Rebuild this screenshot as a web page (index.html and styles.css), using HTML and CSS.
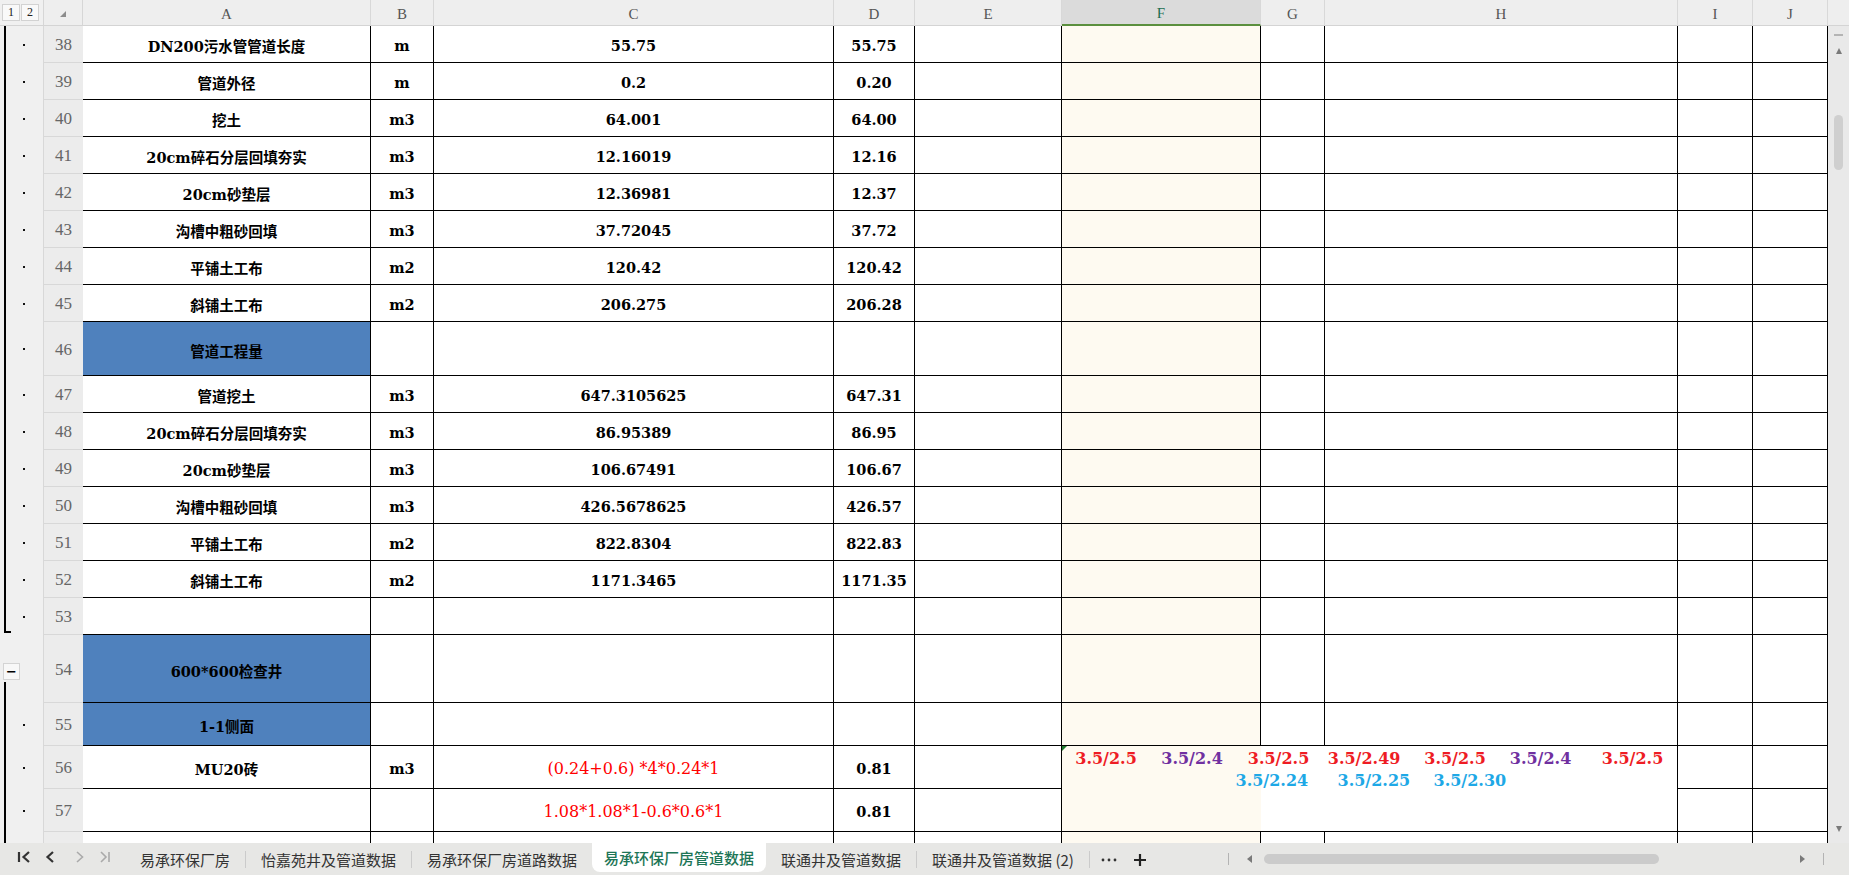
FILE: index.html
```html
<!DOCTYPE html>
<html lang="zh-CN">
<head>
<meta charset="utf-8">
<title>易承环保厂房管道数据</title>
<link rel="stylesheet" href="styles.css">
</head>
<body>
<div class="app">
  <div class="main">
    <div class="sheet">
      <div class="lvl"><span class="lvl-btn">1</span><span class="lvl-btn">2</span></div>
      <div class="corner"><span class="corner-tri"></span></div>
      <div class="ch">A</div><div class="ch">B</div><div class="ch">C</div><div class="ch">D</div><div class="ch">E</div><div class="ch ch-sel">F</div><div class="ch">G</div><div class="ch">H</div><div class="ch">I</div><div class="ch">J</div>

      <div class="ol g"></div><div class="rh">38</div><div class="c">DN200污水管管道长度</div><div class="c">m</div><div class="c">55.75</div><div class="c">55.75</div><div class="c"></div><div class="c f"></div><div class="c"></div><div class="c"></div><div class="c"></div><div class="c"></div>
      <div class="ol g"></div><div class="rh">39</div><div class="c">管道外径</div><div class="c">m</div><div class="c">0.2</div><div class="c">0.20</div><div class="c"></div><div class="c f"></div><div class="c"></div><div class="c"></div><div class="c"></div><div class="c"></div>
      <div class="ol g"></div><div class="rh">40</div><div class="c">挖土</div><div class="c">m3</div><div class="c">64.001</div><div class="c">64.00</div><div class="c"></div><div class="c f"></div><div class="c"></div><div class="c"></div><div class="c"></div><div class="c"></div>
      <div class="ol g"></div><div class="rh">41</div><div class="c">20cm碎石分层回填夯实</div><div class="c">m3</div><div class="c">12.16019</div><div class="c">12.16</div><div class="c"></div><div class="c f"></div><div class="c"></div><div class="c"></div><div class="c"></div><div class="c"></div>
      <div class="ol g"></div><div class="rh">42</div><div class="c">20cm砂垫层</div><div class="c">m3</div><div class="c">12.36981</div><div class="c">12.37</div><div class="c"></div><div class="c f"></div><div class="c"></div><div class="c"></div><div class="c"></div><div class="c"></div>
      <div class="ol g"></div><div class="rh">43</div><div class="c">沟槽中粗砂回填</div><div class="c">m3</div><div class="c">37.72045</div><div class="c">37.72</div><div class="c"></div><div class="c f"></div><div class="c"></div><div class="c"></div><div class="c"></div><div class="c"></div>
      <div class="ol g"></div><div class="rh">44</div><div class="c">平铺土工布</div><div class="c">m2</div><div class="c">120.42</div><div class="c">120.42</div><div class="c"></div><div class="c f"></div><div class="c"></div><div class="c"></div><div class="c"></div><div class="c"></div>
      <div class="ol g"></div><div class="rh">45</div><div class="c">斜铺土工布</div><div class="c">m2</div><div class="c">206.275</div><div class="c">206.28</div><div class="c"></div><div class="c f"></div><div class="c"></div><div class="c"></div><div class="c"></div><div class="c"></div>
      <div class="ol g"></div><div class="rh">46</div><div class="c blue">管道工程量</div><div class="c"></div><div class="c"></div><div class="c"></div><div class="c"></div><div class="c f"></div><div class="c"></div><div class="c"></div><div class="c"></div><div class="c"></div>
      <div class="ol g"></div><div class="rh">47</div><div class="c">管道挖土</div><div class="c">m3</div><div class="c">647.3105625</div><div class="c">647.31</div><div class="c"></div><div class="c f"></div><div class="c"></div><div class="c"></div><div class="c"></div><div class="c"></div>
      <div class="ol g"></div><div class="rh">48</div><div class="c">20cm碎石分层回填夯实</div><div class="c">m3</div><div class="c">86.95389</div><div class="c">86.95</div><div class="c"></div><div class="c f"></div><div class="c"></div><div class="c"></div><div class="c"></div><div class="c"></div>
      <div class="ol g"></div><div class="rh">49</div><div class="c">20cm砂垫层</div><div class="c">m3</div><div class="c">106.67491</div><div class="c">106.67</div><div class="c"></div><div class="c f"></div><div class="c"></div><div class="c"></div><div class="c"></div><div class="c"></div>
      <div class="ol g"></div><div class="rh">50</div><div class="c">沟槽中粗砂回填</div><div class="c">m3</div><div class="c">426.5678625</div><div class="c">426.57</div><div class="c"></div><div class="c f"></div><div class="c"></div><div class="c"></div><div class="c"></div><div class="c"></div>
      <div class="ol g"></div><div class="rh">51</div><div class="c">平铺土工布</div><div class="c">m2</div><div class="c">822.8304</div><div class="c">822.83</div><div class="c"></div><div class="c f"></div><div class="c"></div><div class="c"></div><div class="c"></div><div class="c"></div>
      <div class="ol g"></div><div class="rh">52</div><div class="c">斜铺土工布</div><div class="c">m2</div><div class="c">1171.3465</div><div class="c">1171.35</div><div class="c"></div><div class="c f"></div><div class="c"></div><div class="c"></div><div class="c"></div><div class="c"></div>
      <div class="ol g-end"></div><div class="rh">53</div><div class="c"></div><div class="c"></div><div class="c"></div><div class="c"></div><div class="c"></div><div class="c f"></div><div class="c"></div><div class="c"></div><div class="c"></div><div class="c"></div>
      <div class="ol ol-open"><span class="ol-minus">−</span></div><div class="rh">54</div><div class="c blue">600*600检查井</div><div class="c"></div><div class="c"></div><div class="c"></div><div class="c"></div><div class="c f"></div><div class="c"></div><div class="c"></div><div class="c"></div><div class="c"></div>
      <div class="ol g"></div><div class="rh">55</div><div class="c blue">1-1侧面</div><div class="c"></div><div class="c"></div><div class="c"></div><div class="c"></div><div class="c f"></div><div class="c"></div><div class="c"></div><div class="c"></div><div class="c"></div>
      <div class="ol g"></div><div class="rh">56</div><div class="c">MU20砖</div><div class="c">m3</div><div class="c red">(0.24+0.6) *4*0.24*1</div><div class="c">0.81</div><div class="c"></div>
      <div class="c merge">
        <div class="mline"><span class="t-red" style="width:86px">3.5/2.5</span><span class="t-pur" style="width:86.5px">3.5/2.4</span><span class="t-red" style="width:80px">3.5/2.5</span><span class="t-red" style="width:96.5px">3.5/2.49</span><span class="t-red" style="width:85.5px">3.5/2.5</span><span class="t-pur" style="width:92px">3.5/2.4</span><span class="t-red" style="width:62px">3.5/2.5</span></div>
        <div class="mline"><span class="t-blue" style="width:102px">3.5/2.24</span><span class="t-blue" style="width:96px">3.5/2.25</span><span class="t-blue" style="width:70px">3.5/2.30</span></div>
      </div>
      <div class="c"></div><div class="c"></div>
      <div class="ol g"></div><div class="rh">57</div><div class="c"></div><div class="c"></div><div class="c red">1.08*1.08*1-0.6*0.6*1</div><div class="c">0.81</div><div class="c"></div><div class="c"></div><div class="c"></div>
      <div class="ol g"></div><div class="rh"></div><div class="c"></div><div class="c"></div><div class="c"></div><div class="c"></div><div class="c"></div><div class="c f"></div><div class="c"></div><div class="c"></div><div class="c"></div><div class="c"></div>
    </div>
    <div class="vscroll">
      <div class="vs-head"></div>
      <div class="vs-track">
        <span class="vs-dash"></span>
        <span class="vs-up"></span>
        <span class="vs-thumb"></span>
        <span class="vs-down"></span>
      </div>
    </div>
  </div>
  <div class="tabbar">
    <div class="nav">
      <svg width="125" height="32" viewBox="0 0 125 32">
        <path d="M19 9 V19 M29 9 L23.5 14 L29 19" fill="none" stroke="#333" stroke-width="2.2"/>
        <path d="M53 9 L47.5 14 L53 19" fill="none" stroke="#333" stroke-width="2.2"/>
        <path d="M77 9 L82.5 14 L77 19" fill="none" stroke="#aaa" stroke-width="1.6"/>
        <path d="M101 9 L106 14 L101 19 M109 9 V19" fill="none" stroke="#aaa" stroke-width="1.6"/>
      </svg>
    </div>
    <div class="tab">易承环保厂房</div>
    <span class="sep"></span>
    <div class="tab">怡嘉苑井及管道数据</div>
    <span class="sep"></span>
    <div class="tab">易承环保厂房道路数据</div>
    <div class="tab tab-active">易承环保厂房管道数据</div>
    <div class="tab">联通井及管道数据</div>
    <span class="sep"></span>
    <div class="tab">联通井及管道数据 (2)</div>
    <span class="sep"></span>
    <div class="tools">
      <svg width="60" height="32" viewBox="0 0 60 32">
        <circle cx="13" cy="17" r="1.4" fill="#333"/>
        <circle cx="19" cy="17" r="1.4" fill="#333"/>
        <circle cx="25" cy="17" r="1.4" fill="#333"/>
        <path d="M50 11 V23 M44 17 H56" stroke="#222" stroke-width="2.2"/>
      </svg>
    </div>
    <div class="hscroll">
      <span class="hs-div"></span>
      <span class="hs-left"></span>
      <span class="hs-thumb"></span>
      <span class="hs-right"></span>
      <span class="hs-div hs-div-end"></span>
    </div>
  </div>
</div>
</body>
</html>
```

FILE: styles.css
```css
* { box-sizing: border-box; }
html, body { margin: 0; padding: 0; }
body {
  width: 1849px;
  height: 875px;
  overflow: hidden;
  background: #fff;
  font-family: "DejaVu Serif", "Noto Sans CJK SC", serif;
}
.app { display: flex; flex-direction: column; width: 1849px; height: 875px; }
.main { display: flex; height: 843px; overflow: hidden; flex: none; }

.sheet {
  display: grid;
  grid-template-columns: 43px 40px 288px 63px 400px 81px 147px 199px 64px 353px 75px 75px;
  grid-template-rows: 26px repeat(8, 37px) 54px repeat(7, 37px) 68px 43px 43px 43px 37px;
  width: 1828px;
  flex: none;
}

/* header row */
.lvl {
  background: #f0f0f0;
  display: flex;
  gap: 1px;
  padding: 4px 2px 0;
  border-bottom: 1px solid #d4d4d4;
}
.lvl-btn {
  width: 18px;
  height: 17px;
  border: 1px solid #d2d2d2;
  background: #f9f9f9;
  font: 12px "Liberation Serif", serif;
  color: #222;
  display: flex;
  align-items: center;
  justify-content: center;
}
.corner {
  background: #eeeeee;
  border-left: 1px solid #d6d6d6;
  border-right: 1px solid #d6d6d6;
  border-bottom: 1px solid #d4d4d4;
  display: flex;
  align-items: center;
  justify-content: center;
  padding-top: 2px;
}
.corner-tri {
  width: 0;
  height: 0;
  border-left: 6px solid transparent;
  border-bottom: 6px solid #8c8c8c;
}
.ch {
  background: #eeeeee;
  border-right: 1px solid #d8d8d8;
  border-bottom: 1px solid #d4d4d4;
  display: flex;
  align-items: center;
  justify-content: center;
  font: 15px "Liberation Serif", serif;
  color: #555;
  padding-top: 3px;
}
.ch-sel {
  background: #dbdbdb;
  color: #1d6f52;
  border-bottom: 2px solid #5b8f3e;
}

/* outline column */
.ol {
  background: #f0f0f0;
  display: flex;
  align-items: center;
  padding-left: 23px;
}
.ol::after {
  content: "";
  width: 2px;
  height: 2px;
  background: #111;
}
.g {
  background: linear-gradient(#000, #000) 4px 0 / 2px 100% no-repeat, #f0f0f0;
}
.g-end {
  background:
    linear-gradient(#000, #000) left 4px top 0 / 2px calc(100% - 2px) no-repeat,
    linear-gradient(#000, #000) left 4px bottom 2px / 7px 2px no-repeat,
    #f0f0f0;
}
.ol-open {
  align-items: flex-start;
  padding: 28px 0 0 3px;
  background: linear-gradient(#000, #000) left 4px bottom 0 / 2px 21px no-repeat, #f0f0f0;
}
.ol-open::after { display: none; }
.ol-minus {
  width: 17px;
  height: 17px;
  border: 1px solid #d4d4d4;
  background: #f8f8f8;
  display: flex;
  align-items: center;
  justify-content: center;
  font: bold 13px "DejaVu Sans", sans-serif;
  color: #000;
}

/* row header */
.rh {
  background: #ececec;
  border-left: 1px solid #d8d8d8;
  border-bottom: 1px solid #d8d8d8;
  display: flex;
  align-items: center;
  justify-content: center;
  font: 17px "Liberation Serif", serif;
  color: #666;
  padding-top: 2px;
}

/* data cells */
.c {
  border-right: 1px solid #000;
  border-bottom: 1px solid #000;
  display: flex;
  align-items: center;
  justify-content: center;
  font-weight: bold;
  font-size: 14.5px;
  color: #000;
  padding-top: 3px;
  white-space: pre;
}
.f { background: #fefaf1; }
.blue { background: #4f81bd; }
.red {
  color: #f00;
  font-weight: normal;
  font-size: 16px;
}
.merge {
  grid-column: span 3;
  grid-row: span 2;
  flex-direction: column;
  justify-content: flex-start;
  align-items: center;
  padding-top: 2px;
  background: linear-gradient(to right, #fefaf1 0 199px, #fff 199px);
  font-weight: bold;
  font-size: 16px;
  line-height: 22px;
  position: relative;
}
.merge::before {
  content: "";
  position: absolute;
  left: 0;
  top: 0;
  width: 0;
  height: 0;
  border-top: 5px solid #1f7a2e;
  border-right: 5px solid transparent;
}
.mline { display: flex; white-space: pre; }
.mline span { display: block; flex: none; text-align: left; }
.t-red { color: #ee1c24; }
.t-pur { color: #7030a0; }
.t-blue { color: #1ea8e6; }

/* vertical scrollbar */
.vscroll { width: 21px; flex: none; display: flex; flex-direction: column; }
.vs-head { height: 26px; background: #eeeeee; border-bottom: 1px solid #d4d4d4; flex: none; }
.vs-track {
  flex: 1;
  background: #e9e9e9;
  display: flex;
  flex-direction: column;
  align-items: center;
  padding-top: 8px;
}
.vs-dash { width: 9px; height: 2px; background: #b4b4b4; }
.vs-up {
  margin-top: 12px;
  width: 0;
  height: 0;
  border-left: 3.5px solid transparent;
  border-right: 3.5px solid transparent;
  border-bottom: 6px solid #7a7a7a;
}
.vs-thumb {
  margin-top: 61px;
  width: 9px;
  height: 55px;
  border-radius: 5px;
  background: #cfcfcf;
}
.vs-down {
  margin-top: auto;
  margin-bottom: 11px;
  width: 0;
  height: 0;
  border-left: 3.5px solid transparent;
  border-right: 3.5px solid transparent;
  border-top: 6px solid #7a7a7a;
}

/* tab bar */
.tabbar {
  height: 32px;
  flex: none;
  background: #e7e7e5;
  display: flex;
  align-items: stretch;
  font-family: "Noto Sans CJK SC", "Noto Sans", sans-serif;
  font-size: 15px;
  color: #333;
}
.nav { width: 125px; flex: none; display: flex; align-items: flex-start; }
.nav svg { display: block; }
.tab {
  padding: 0 15px;
  display: flex;
  align-items: center;
  white-space: nowrap;
  flex: none;
}
.tab-active {
  background: #fff;
  color: #1c7556;
  font-weight: 500;
  padding: 0 12px;
  height: 29px;
  align-self: flex-start;
  border-radius: 0 0 8px 8px;
}
.sep {
  width: 1px;
  height: 17px;
  background: #cbcbcb;
  align-self: center;
  flex: none;
}
.tools { flex: none; display: flex; align-items: flex-start; }
.tools svg { display: block; }
.hscroll {
  margin-left: auto;
  width: 621px;
  flex: none;
  display: flex;
  align-items: center;
}
.hs-div { width: 1px; height: 12px; background: #b3b3b3; flex: none; }
.hs-left {
  margin-left: 18px;
  width: 0;
  height: 0;
  border-top: 4px solid transparent;
  border-bottom: 4px solid transparent;
  border-right: 5px solid #7a7a7a;
  flex: none;
}
.hs-thumb {
  margin-left: 12px;
  width: 395px;
  height: 10px;
  border-radius: 5px;
  background: #cbcbcb;
  flex: none;
}
.hs-right {
  margin-left: 141px;
  width: 0;
  height: 0;
  border-top: 4px solid transparent;
  border-bottom: 4px solid transparent;
  border-left: 5px solid #7a7a7a;
  flex: none;
}
.hs-div-end { margin-left: 18px; }
```
